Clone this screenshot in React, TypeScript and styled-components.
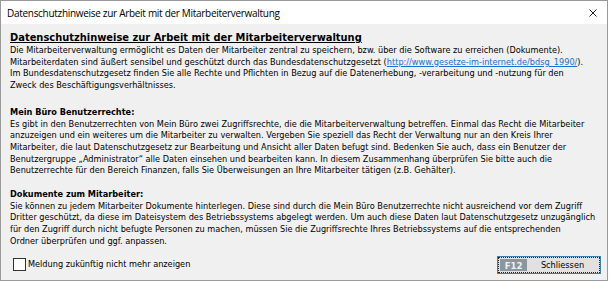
import React from "react";
import styled, { createGlobalStyle } from "styled-components";

const GlobalStyle = createGlobalStyle`
  html, body { margin: 0; padding: 0; background: #ffffff; }
  #root { width: 610px; height: 282px; }
`;

const Window = styled.div`
  box-sizing: border-box;
  width: 608px;
  height: 281px;
  border: 1px solid #9a9a9a;
  background: #f0f0f0;
  display: flex;
  flex-direction: column;
`;

const TitleBar = styled.div`
  height: 23px;
  background: #ffffff;
  display: flex;
  align-items: center;
  justify-content: space-between;
  padding: 0 10px 0 6px;
  flex-shrink: 0;
`;

const Title = styled.span`
  font: 10px "Open Sans", sans-serif;
  letter-spacing: -0.3px;
  color: #000;
  white-space: nowrap;
`;

const CloseIcon = styled.svg`
  width: 8px;
  height: 8px;
  display: block;
`;

const Content = styled.div`
  flex: 1;
  padding: 7px 10px 0 9px;
  font: 9.1px "DejaVu Sans Condensed", "DejaVu Sans", sans-serif;
  color: #000;
`;

const Heading = styled.h1`
  margin: 0;
  font: bold 11px "DejaVu Sans Condensed", "DejaVu Sans", sans-serif;
  line-height: 14px;
  text-decoration: underline;
  text-underline-offset: 1px;
  white-space: nowrap;
`;

const Section = styled.section<{ $gap: number }>`
  margin-top: ${(p) => p.$gap}px;
`;

const SectionTitle = styled.div`
  font-weight: bold;
  line-height: 11.7px;
  white-space: nowrap;
`;

const Line = styled.div`
  line-height: 11.7px;
  white-space: nowrap;
`;

const Link = styled.a`
  color: #1a6fd1;
  text-decoration: underline;
`;

const Footer = styled.div`
  height: 33px;
  display: flex;
  align-items: center;
  justify-content: space-between;
  padding: 0 6px 0 12px;
  flex-shrink: 0;
`;

const CheckLabel = styled.label`
  display: flex;
  align-items: center;
  gap: 2px;
  font: 9.1px "DejaVu Sans Condensed", "DejaVu Sans", sans-serif;
  color: #000;
`;

const CheckBox = styled.span`
  box-sizing: border-box;
  width: 13px;
  height: 13px;
  border: 1px solid #333;
  background: #fff;
  display: inline-block;
`;

const Button = styled.button`
  box-sizing: border-box;
  width: 104px;
  height: 18px;
  margin-top: 2px;
  padding: 2px;
  border: 1px solid #3c7fb1;
  background: #e1e1e1;
  display: flex;
  align-items: stretch;
  outline: 1px dotted #222;
  outline-offset: -2px;
  cursor: default;
`;

const KeyBadge = styled.span`
  width: 27px;
  background: #8a979f;
  color: #eef1f3;
  font: bold 9.5px "DejaVu Sans Condensed", "DejaVu Sans", sans-serif;
  display: flex;
  align-items: center;
  justify-content: center;
`;

const ButtonText = styled.span`
  flex: 1;
  font: 9.1px "DejaVu Sans Condensed", "DejaVu Sans", sans-serif;
  color: #000;
  display: flex;
  align-items: center;
  justify-content: center;
`;

const sections = [
  {
    title: "Mein Büro Benutzerrechte:",
    gap: 15,
    lines: [
      "Es gibt in den Benutzerrechten von Mein Büro zwei Zugriffsrechte, die die Mitarbeiterverwaltung betreffen. Einmal das Recht die Mitarbeiter",
      "anzuzeigen und ein weiteres um die Mitarbeiter zu verwalten. Vergeben Sie speziell das Recht der Verwaltung nur an den Kreis Ihrer",
      "Mitarbeiter, die laut Datenschutzgesetz zur Bearbeitung und Ansicht aller Daten befugt sind. Bedenken Sie auch, dass ein Benutzer der",
      "Benutzergruppe „Administrator\u201C alle Daten einsehen und bearbeiten kann. In diesem Zusammenhang überprüfen Sie bitte auch die",
      "Benutzerrechte für den Bereich Finanzen, falls Sie Überweisungen an Ihre Mitarbeiter tätigen (z.B. Gehälter).",
    ],
  },
  {
    title: "Dokumente zum Mitarbeiter:",
    gap: 12,
    lines: [
      "Sie können zu jedem Mitarbeiter Dokumente hinterlegen. Diese sind durch die Mein Büro Benutzerrechte nicht ausreichend vor dem Zugriff",
      "Dritter geschützt, da diese im Dateisystem des Betriebssystems abgelegt werden. Um auch diese Daten laut Datenschutzgesetz unzugänglich",
      "für den Zugriff durch nicht befugte Personen zu machen, müssen Sie die Zugriffsrechte Ihres Betriebssystems auf die entsprechenden",
      "Ordner überprüfen und ggf. anpassen.",
    ],
  },
];

export default function App() {
  return (
    <>
      <GlobalStyle />
      <Window>
        <TitleBar>
          <Title>Datenschutzhinweise zur Arbeit mit der Mitarbeiterverwaltung</Title>
          <CloseIcon viewBox="0 0 8 8">
            <path d="M0.5 0.5 L7.5 7.5 M7.5 0.5 L0.5 7.5" stroke="#222" strokeWidth="1" />
          </CloseIcon>
        </TitleBar>
        <Content>
          <Heading>Datenschutzhinweise zur Arbeit mit der Mitarbeiterverwaltung</Heading>
          <Line>Die Mitarbeiterverwaltung ermöglicht es Daten der Mitarbeiter zentral zu speichern, bzw. über die Software zu erreichen (Dokumente).</Line>
          <Line>
            Mitarbeiterdaten sind äußert sensibel und geschützt durch das Bundesdatenschutzgesetzt (
            <Link href="#">http://www.gesetze-im-internet.de/bdsg_1990/</Link>).
          </Line>
          <Line>Im Bundesdatenschutzgesetz finden Sie alle Rechte und Pflichten in Bezug auf die Datenerhebung, -verarbeitung und -nutzung für den</Line>
          <Line>Zweck des Beschäftigungsverhältnisses.</Line>
          {sections.map((s) => (
            <Section key={s.title} $gap={s.gap}>
              <SectionTitle>{s.title}</SectionTitle>
              {s.lines.map((l) => (
                <Line key={l}>{l}</Line>
              ))}
            </Section>
          ))}
        </Content>
        <Footer>
          <CheckLabel>
            <CheckBox />
            Meldung zukünftig nicht mehr anzeigen
          </CheckLabel>
          <Button type="button">
            <KeyBadge>F12</KeyBadge>
            <ButtonText>Schliessen</ButtonText>
          </Button>
        </Footer>
      </Window>
    </>
  );
}
